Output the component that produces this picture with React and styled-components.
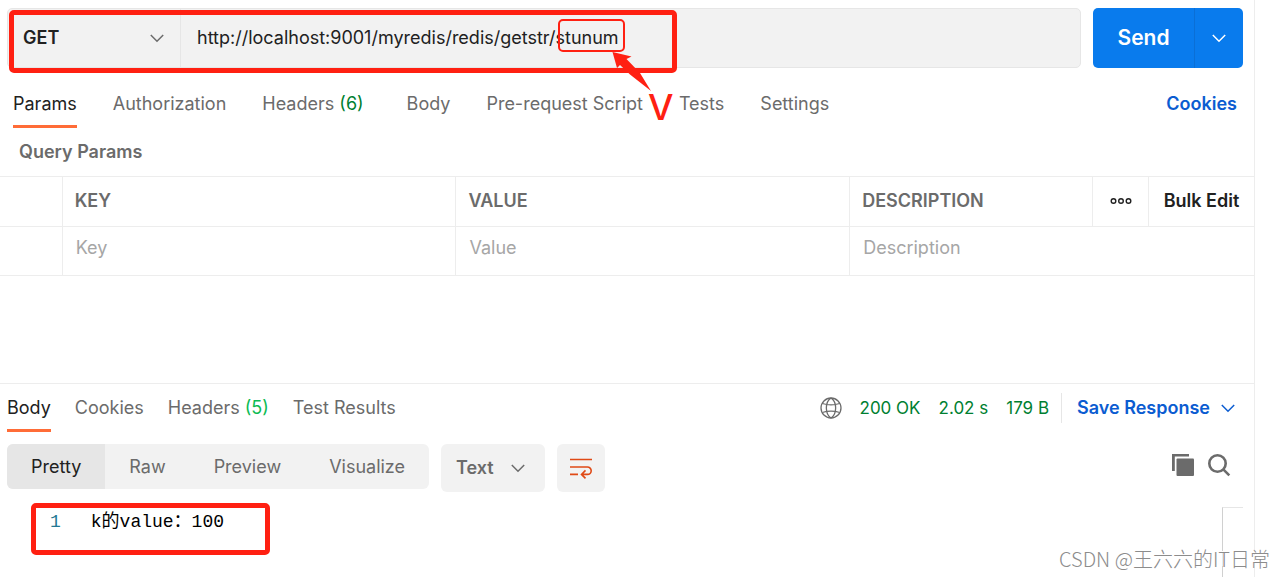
import React from "react";
import styled, { createGlobalStyle, css } from "styled-components";

const GlobalStyle = createGlobalStyle`
  * { box-sizing: border-box; }
  body {
    margin: 0;
    background: #fff;
    color: #212121;
    font: 400 18px/24px Inter, "Noto Sans CJK SC", sans-serif;
  }
  button, input, select { font: inherit; color: inherit; }
  button { border: 0; padding: 0; background: none; cursor: pointer; }
`;

const Page = styled.div`
  position: relative;
  min-height: 100vh;
  padding-right: 30px;
  display: flex;
  overflow: hidden;
`;

const Workspace = styled.main`
  flex: 1;
  min-width: 0;
  display: flex;
  flex-direction: column;
  border-right: 1px solid #ededed;
`;

const RequestPane = styled.section`
  padding-bottom: 107px;
`;

const RequestBar = styled.form`
  position: relative;
  display: flex;
  gap: 12px;
  padding: 8px 11px 0 7px;
`;

const UrlGroup = styled.div`
  flex: 1;
  display: flex;
  height: 60px;
  background: #f2f2f2;
  border: 1px solid #e6e6e6;
  border-radius: 5px;
`;

const SelectBox = styled.div`
  display: grid;
  grid-template-columns: 1fr;
  align-items: center;
  svg {
    grid-area: 1 / 1;
    justify-self: end;
    margin-right: 16px;
    pointer-events: none;
  }
`;

const MethodBox = styled(SelectBox)`
  width: 173px;
  border-right: 1px solid #e6e6e6;
`;

const Select = styled.select`
  grid-area: 1 / 1;
  width: 100%;
  height: 100%;
  padding: 0 15px;
  border: 0;
  outline: 0;
  appearance: none;
  background: transparent;
  font-weight: 600;
  color: ${(p) => p.$color || "#212121"};
`;

const UrlInput = styled.input`
  flex: 1;
  min-width: 0;
  padding: 0 16px;
  border: 0;
  outline: 0;
  background: transparent;
`;

const SendGroup = styled.div`
  display: flex;
  width: 150px;
  height: 60px;
  border-radius: 5px;
  overflow: hidden;
  background: #097bed;
  color: #fff;
`;

const SendButton = styled.button`
  flex: 1;
  font-size: 21px;
  font-weight: 600;
`;

const SendMenuButton = styled.button`
  width: 49px;
  border-left: 1px solid #0a6fd6;
  display: grid;
  place-items: center;
`;

const TabBar = styled.nav`
  display: flex;
  align-items: flex-start;
  gap: ${(p) => p.$gap}px;
`;

const RequestTabs = styled(TabBar)`
  padding: 24px 17px 0 13px;
`;

const Tab = styled.button`
  height: 36px;
  padding-bottom: 9px;
  white-space: nowrap;
  color: #6b6b6b;
  border-bottom: 3px solid transparent;
  ${(p) =>
    p.$active &&
    css`
      color: #212121;
      border-bottom-color: #ff6c37;
    `}
`;

const Count = styled.span`
  margin-right: ${(p) => p.$space || 0}px;
  color: ${(p) => p.$color};
`;

const LinkText = styled.a`
  margin-left: auto;
  color: #0b5cd1;
  font-weight: 600;
  text-decoration: none;
`;

const SectionTitle = styled.h2`
  margin: 0;
  padding: 12px 19px;
  font-size: 18px;
  line-height: 24px;
  font-weight: 600;
  color: #6b6b6b;
`;

const ParamsTable = styled.table`
  width: 100%;
  table-layout: fixed;
  border-collapse: separate;
  border-spacing: 0;
  border-top: 1px solid #ededed;
`;

const Col = styled.col`
  width: ${(p) => p.$width};
`;

const Th = styled.th`
  height: 50px;
  padding: 0 12px 2px;
  text-align: left;
  font-weight: 600;
  color: #6b6b6b;
  border-bottom: 1px solid #ededed;
  border-right: ${(p) => (p.$last ? "0" : "1px solid #ededed")};
`;

const Td = styled.td`
  height: 49px;
  padding: 0 12px 6px;
  border-bottom: 1px solid #ededed;
  border-right: ${(p) => (p.$last ? "0" : "1px solid #ededed")};
`;

const CellInput = styled.input`
  display: block;
  width: 100%;
  height: 24px;
  padding: 0 1px;
  border: 0;
  outline: 0;
  background: transparent;
  &::placeholder { color: #a6a6a6; opacity: 1; }
`;

const HeaderButton = styled.button`
  display: flex;
  justify-content: center;
  width: 100%;
  white-space: nowrap;
  color: #212121;
  font-weight: 600;
`;

const ResponsePane = styled.section`
  flex: 1;
  display: flex;
  flex-direction: column;
  border-top: 1px solid #ededed;
`;

const ResponseHeader = styled.div`
  display: flex;
  justify-content: space-between;
  padding: 12px 19px 0 7px;
`;

const Meta = styled.div`
  display: flex;
  align-items: center;
  gap: 18px;
  height: 24px;
  white-space: nowrap;
  font-size: 17px;
  color: #007f31;
  svg { color: #6b6b6b; }
`;

const SaveButton = styled.button`
  display: flex;
  align-items: center;
  gap: 11px;
  height: 30px;
  margin-left: -6px;
  padding-left: 15px;
  border-left: 1px solid #e6e6e6;
  color: #0b5cd1;
  font-size: 18px;
  font-weight: 600;
  svg { color: #0b5cd1; }
`;

const Toolbar = styled.div`
  display: flex;
  align-items: flex-start;
  gap: 12px;
  padding: 12px 23px 0 7px;
`;

const ViewModes = styled.div`
  display: flex;
  height: 45px;
  border-radius: 6px;
  overflow: hidden;
  background: #f2f2f2;
`;

const ViewMode = styled.button`
  padding: 0 24px;
  color: ${(p) => (p.$active ? "#212121" : "#6b6b6b")};
  background: ${(p) => (p.$active ? "#e6e6e6" : "transparent")};
`;

const FormatBox = styled(SelectBox)`
  width: 104px;
  height: 48px;
  border-radius: 6px;
  background: #f2f2f2;
  svg { margin-right: 20px; }
`;

const WrapButton = styled.button`
  display: grid;
  place-items: center;
  width: 48px;
  height: 48px;
  border-radius: 6px;
  background: #f2f2f2;
`;

const ToolIcons = styled.div`
  display: flex;
  gap: 12px;
  margin-left: auto;
  padding-top: 9px;
`;

const IconButton = styled.button`
  width: 24px;
  height: 24px;
  svg { display: block; }
`;

const Editor = styled.div`
  flex: 1;
  display: flex;
  margin-top: 15px;
  padding-right: 11px;
`;

const CodeLine = styled.div`
  flex: 1;
  display: flex;
  align-items: flex-start;
  gap: 30px;
  padding: 3px 0 0 50px;
  font: 18px/24px "Liberation Mono", "Noto Sans CJK SC", monospace;
  color: #000;
`;

const LineNumber = styled.span`
  color: #237893;
`;

const OverviewRuler = styled.div`
  width: 21px;
  border-top: 1px solid #e6e6e6;
  border-left: 1px solid #d0d0d0;
`;

const Highlight = styled.div`
  position: absolute;
  left: ${(p) => p.$x}px;
  top: ${(p) => p.$y}px;
  width: ${(p) => p.$w}px;
  height: ${(p) => p.$h}px;
  border: ${(p) => p.$line}px solid #ff2012;
  border-radius: 5px;
  pointer-events: none;
`;

const Arrow = styled.svg`
  position: absolute;
  left: 610px;
  top: 50px;
  pointer-events: none;
`;

const Mark = styled.span`
  position: absolute;
  left: 648px;
  top: 86px;
  font: 500 36px/42px Inter, sans-serif;
  color: #ff2012;
  pointer-events: none;
`;

const Watermark = styled.span`
  position: absolute;
  right: 15px;
  bottom: 5px;
  font: 300 20px/26px "Noto Sans CJK SC", sans-serif;
  color: #8c8c8c;
  text-shadow: -1px -1px 0 #fff;
  white-space: nowrap;
  pointer-events: none;
`;

const Chevron = ({ color }) => (
  <svg width="14" height="9" viewBox="0 0 14 9" fill="none" stroke={color} strokeWidth="1.5" aria-hidden="true">
    <path d="M0.8 1 7 7.2 13.2 1" />
  </svg>
);

const Dots = () => (
  <svg width="22" height="8" viewBox="0 0 22 8" fill="none" stroke="#212121" strokeWidth="1.4" aria-hidden="true">
    <circle cx="3.5" cy="4" r="2.3" />
    <circle cx="11" cy="4" r="2.3" />
    <circle cx="18.5" cy="4" r="2.3" />
  </svg>
);

const Globe = () => (
  <svg width="22" height="22" viewBox="0 0 22 22" fill="none" stroke="currentColor" strokeWidth="1.3" aria-hidden="true">
    <circle cx="11" cy="11" r="10" />
    <path d="M11 1C4.8 5 4.8 17 11 21M11 1c6.2 4 6.2 16 0 20M2.3 6.5c5 1.6 12.4 1.6 17.4 0M2.3 15.5c5-1.6 12.4-1.6 17.4 0" />
  </svg>
);

const WrapIcon = () => (
  <svg width="24" height="22" viewBox="0 0 24 22" fill="none" stroke="#e04a16" strokeWidth="1.6" aria-hidden="true">
    <path d="M1 2.500h22M1 10h17.500a3.700 3.700 0 0 1 0 7.400H13M1 17.400h8M16.500 13.400l-4 4 4 4" />
  </svg>
);

const CopyIcon = () => (
  <svg width="24" height="24" viewBox="0 0 24 24" fill="#6b6b6b" aria-hidden="true">
    <path d="M1 1h17v2.6H3.8V18H1z" />
    <rect x="5.5" y="5.5" width="17.5" height="17.5" rx="1" />
  </svg>
);

const SearchIcon = () => (
  <svg width="24" height="24" viewBox="0 0 24 24" fill="none" stroke="#6b6b6b" strokeWidth="2.6" aria-hidden="true">
    <circle cx="10.5" cy="10.5" r="8.2" />
    <path d="m16.3 16.3 6 6" />
  </svg>
);

export default function App() {
  return (
    <>
      <GlobalStyle />
      <Page>
        <Workspace>
          <RequestPane>
            <RequestBar onSubmit={(e) => e.preventDefault()}>
              <UrlGroup>
                <MethodBox>
                  <Select aria-label="Method" defaultValue="GET">
                    <option>GET</option>
                  </Select>
                  <Chevron color="#6b6b6b" />
                </MethodBox>
                <UrlInput aria-label="Request URL" defaultValue="http://localhost:9001/myredis/redis/getstr/stunum" />
              </UrlGroup>
              <SendGroup>
                <SendButton type="submit">Send</SendButton>
                <SendMenuButton type="button" aria-label="Send options">
                  <Chevron color="#fff" />
                </SendMenuButton>
              </SendGroup>
            </RequestBar>

            <RequestTabs $gap={36}>
              <Tab $active>Params</Tab>
              <Tab>Authorization</Tab>
              <Tab>Headers <Count $color="#007f31" $space={7}>(6)</Count></Tab>
              <Tab>Body</Tab>
              <Tab>Pre-request Script</Tab>
              <Tab>Tests</Tab>
              <Tab>Settings</Tab>
              <LinkText href="#cookies">Cookies</LinkText>
            </RequestTabs>

            <SectionTitle>Query Params</SectionTitle>
            <ParamsTable>
              <colgroup>
                <Col $width="5%" />
                <Col $width="31.4%" />
                <Col $width="31.4%" />
                <Col />
                <Col $width="56px" />
                <Col $width="105px" />
              </colgroup>
              <thead>
                <tr>
                  <Th />
                  <Th>KEY</Th>
                  <Th>VALUE</Th>
                  <Th>DESCRIPTION</Th>
                  <Th><HeaderButton aria-label="More columns"><Dots /></HeaderButton></Th>
                  <Th $last><HeaderButton>Bulk Edit</HeaderButton></Th>
                </tr>
              </thead>
              <tbody>
                <tr>
                  <Td />
                  <Td><CellInput aria-label="Key" placeholder="Key" /></Td>
                  <Td><CellInput aria-label="Value" placeholder="Value" /></Td>
                  <Td $last colSpan={3}><CellInput aria-label="Description" placeholder="Description" /></Td>
                </tr>
              </tbody>
            </ParamsTable>
          </RequestPane>

          <ResponsePane>
            <ResponseHeader>
              <TabBar $gap={24}>
                <Tab $active>Body</Tab>
                <Tab>Cookies</Tab>
                <Tab>Headers <Count $color="#0cbb52">(5)</Count></Tab>
                <Tab>Test Results</Tab>
              </TabBar>
              <Meta>
                <Globe />
                <span>200 OK</span>
                <span>2.02 s</span>
                <span>179 B</span>
                <SaveButton>Save Response <Chevron color="currentColor" /></SaveButton>
              </Meta>
            </ResponseHeader>

            <Toolbar>
              <ViewModes>
                <ViewMode $active>Pretty</ViewMode>
                <ViewMode>Raw</ViewMode>
                <ViewMode>Preview</ViewMode>
                <ViewMode>Visualize</ViewMode>
              </ViewModes>
              <FormatBox>
                <Select aria-label="Response format" $color="#6b6b6b" defaultValue="Text">
                  <option>Text</option>
                </Select>
                <Chevron color="#6b6b6b" />
              </FormatBox>
              <WrapButton aria-label="Wrap lines"><WrapIcon /></WrapButton>
              <ToolIcons>
                <IconButton aria-label="Copy"><CopyIcon /></IconButton>
                <IconButton aria-label="Search"><SearchIcon /></IconButton>
              </ToolIcons>
            </Toolbar>

            <Editor>
              <CodeLine>
                <LineNumber>1</LineNumber>
                <span>k的value：100</span>
              </CodeLine>
              <OverviewRuler />
            </Editor>
          </ResponsePane>
        </Workspace>

        <Highlight $x={9} $y={10} $w={668} $h={63} $line={5} />
        <Highlight $x={558} $y={19} $w={67} $h={33} $line={2} />
        <Arrow width="44" height="42" viewBox="0 0 44 42" fill="#ff2012" aria-hidden="true">
          <path d="M2.5 2 21.5 6.5 16.5 9 30 23 41 41 20 24.5 10 15 7 18z" />
        </Arrow>
        <Mark>V</Mark>
        <Highlight $x={31} $y={503} $w={239} $h={52} $line={5} />
        <Watermark>CSDN @王六六的IT日常</Watermark>
      </Page>
    </>
  );
}
